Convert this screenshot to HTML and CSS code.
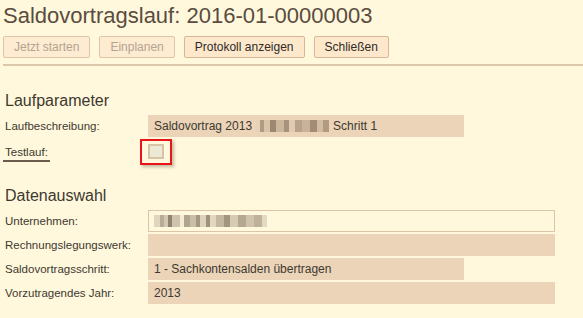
FILE: index.html
```html
<!DOCTYPE html>
<html lang="de">
<head>
    <meta charset="UTF-8">
    <title>Saldovortragslauf</title>
    <link rel="stylesheet" href="styles.css">
</head>
<body>
    <h1>Saldovortragslauf: 2016-01-00000003</h1>

    <div class="toolbar">
        <button class="btn" disabled>Jetzt starten</button>
        <button class="btn" disabled>Einplanen</button>
        <button class="btn">Protokoll anzeigen</button>
        <button class="btn">Schließen</button>
    </div>

    <h2>Laufparameter</h2>
    <div class="form">
        <div class="label">Laufbeschreibung:</div>
        <div class="field short">Saldovortrag 2013 <span class="blur b1"></span> Schritt 1</div>

        <div class="label"><span class="marked">Testlauf:</span></div>
        <div class="check-row">
            <span class="highlight"><span class="checkbox"></span></span>
        </div>
    </div>

    <h2 class="second">Datenauswahl</h2>
    <div class="form">
        <div class="label">Unternehmen:</div>
        <div class="field long open"><span class="blur b2"></span></div>

        <div class="label">Rechnungslegungswerk:</div>
        <div class="field long"></div>

        <div class="label">Saldovortragsschritt:</div>
        <div class="field short">1 - Sachkontensalden übertragen</div>

        <div class="label">Vorzutragendes Jahr:</div>
        <div class="field long">2013</div>
    </div>
</body>
</html>
```

FILE: styles.css
```css
body {
    margin: 0;
    padding: 0 0 0 3px;
    background: #fff8dc;
    font-family: "Liberation Sans", Arial, sans-serif;
    color: #3e3830;
    font-size: 12px;
}
h1 {
    font-size: 22px;
    font-weight: normal;
    color: #5a4c3e;
    margin: 0;
    padding-top: 2px;
    line-height: 27px;
}
.toolbar {
    display: flex;
    gap: 9px;
    margin-top: 7px;
    padding-bottom: 6px;
    border-bottom: 2px solid #dcc7ab;
}
.btn {
    font-family: inherit;
    font-size: 12px;
    height: 22px;
    padding: 0 10px;
    background: #fde8cc;
    border: 1px solid #d6b896;
    border-radius: 2px;
    color: #2e2a26;
}
.btn:disabled {
    color: #b3a48f;
    background: #fdebd2;
    border-color: #e0c6a6;
}
h2 {
    font-size: 16px;
    font-weight: normal;
    color: #3e3830;
    margin: 24px 0 0 2px;
    line-height: 21px;
}
h2.second {
    margin-top: 20px;
}
.form {
    display: grid;
    grid-template-columns: 145px auto;
    row-gap: 2px;
    margin-top: 4px;
    justify-items: start;
}
.label {
    padding-left: 2px;
    line-height: 22px;
    font-size: 11.5px;
    align-self: center;
}
.marked {
    display: inline-block;
    border-bottom: 2px solid #6b5c4c;
    line-height: 15px;
    padding-right: 2px;
    margin-left: -2px;
    padding-left: 2px;
}
.field {
    box-sizing: border-box;
    height: 22px;
    line-height: 22px;
    padding: 0 6px;
    background: #ebd4b8;
    white-space: nowrap;
    display: flex;
    align-items: center;
    gap: 4px;
}
.field.short { width: 316px; }
.field.long { width: 407px; }
.field.open {
    background: #fff8dc;
    border: 1px solid #dcc4a6;
    padding-left: 5px;
}
.check-row {
    height: 26px;
    margin-left: -8px;
}
.highlight {
    display: inline-block;
    box-sizing: border-box;
    width: 32px;
    height: 26px;
    border: 2px solid #e8151b;
    box-shadow: 2px 2px 3px rgba(90, 70, 40, 0.35);
    padding: 3px 0 0 6px;
}
.checkbox {
    display: block;
    box-sizing: border-box;
    width: 16px;
    height: 15px;
    background: #ece8d6;
    border: 2px solid #d8c3a6;
}
.blur {
    display: inline-block;
    height: 12px;
    filter: blur(0.6px);
}
.b1 {
    width: 73px;
    background: linear-gradient(90deg, #e8d2b6 0 4px, #b09a84 4px 8px, #d9c4a8 8px 14px, #9c8772 14px 20px, #cdb79c 20px 28px, #a8927c 28px 33px, #e0cbb0 33px 39px, #b8a28c 39px 46px, #c8b298 46px 54px, #a28c76 54px 61px, #d2bca2 61px 67px, #b09a82 67px 73px);
}
.b2 {
    width: 113px;
    background: linear-gradient(90deg, #e0d6c0 0 6px, #b8ac98 6px 10px, #d4c8b2 10px 14px, #8f8472 14px 18px, #cfc3ab 18px 26px, #f3ecd6 26px 30px, #b2a58f 30px 36px, #cabea6 36px 42px, #a49882 42px 46px, #ddd2bb 46px 52px, #9e927d 52px 56px, #e2d8c2 56px 62px, #c4b8a0 62px 70px, #a3967f 70px 76px, #d6cbb3 76px 84px, #b4a892 84px 92px, #d0c4ac 92px 100px, #bfb29a 100px 108px, #e4dac4 108px 113px);
}
```
